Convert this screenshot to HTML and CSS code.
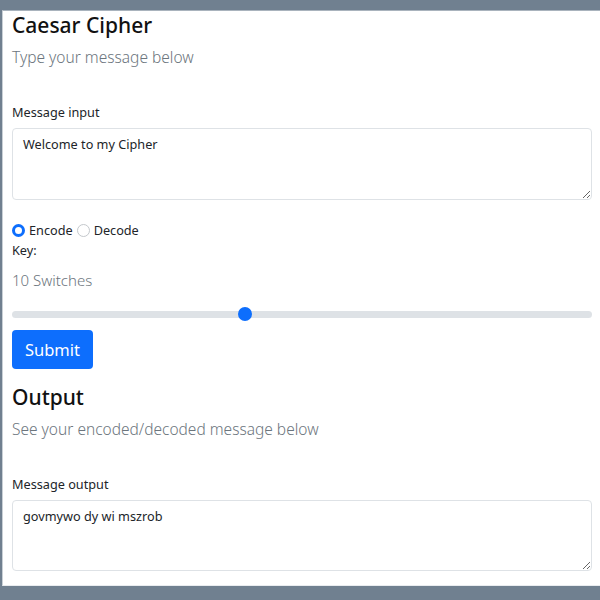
FILE: index.html
```html
<!DOCTYPE html>
<html lang="en">
<head>
<meta charset="utf-8">
<title>Caesar Cipher</title>
<link rel="stylesheet" href="styles.css">
</head>
<body>
<main class="card">
  <h3 class="title">Caesar Cipher</h3>
  <p class="lead">Type your message below</p>
  <label class="label label-first" for="msg-in">Message input</label>
  <textarea id="msg-in" class="field">Welcome to my Cipher</textarea>
  <div class="radios">
    <label class="radio"><input type="radio" name="mode" checked> Encode</label>
    <label class="radio"><input type="radio" name="mode"> Decode</label>
  </div>
  <div class="label">Key:</div>
  <p class="switches">10 Switches</p>
  <input class="range" type="range" min="0" max="25" value="10">
  <button class="btn" type="button">Submit</button>
  <h3 class="title title-out">Output</h3>
  <p class="lead">See your encoded/decoded message below</p>
  <label class="label label-first" for="msg-out">Message output</label>
  <textarea id="msg-out" class="field field-out">govmywo dy wi mszrob</textarea>
</main>
</body>
</html>
```

FILE: styles.css
```css
html, body {
  margin: 0;
  padding: 0;
}
body {
  background: #708090;
  font-family: "Noto Sans", "Open Sans", sans-serif;
  color: #212529;
  padding-top: 10px;
  padding-bottom: 14px;
}
.card {
  display: flex;
  flex-direction: column;
  align-items: flex-start;
  background: #fff;
  margin-left: 2px;
  border-left: 1px solid #c9d0d6;
  border-top: 1px solid #a9b3bd;
  border-bottom: 1px solid #e9ecef;
  padding: 0 8px 14px 9px;
}
.title {
  margin: 0;
  font-size: 21px;
  line-height: 28px;
  font-weight: 500;
  color: #111;
}
.title-out {
  margin-top: 14px;
}
.lead {
  margin: 6px 0 0;
  font-size: 15.5px;
  line-height: 24px;
  font-weight: 300;
  color: #6c757d;
}
.label {
  display: block;
  font-size: 12.7px;
  line-height: 20px;
  color: #212529;
}
.label-first {
  margin-top: 33px;
}
.field {
  box-sizing: border-box;
  align-self: stretch;
  margin-top: 6px;
  height: 72px;
  border: 1px solid #dee2e6;
  border-radius: 4px;
  padding: 5px 10px;
  font-family: inherit;
  font-size: 12.7px;
  line-height: 20px;
  color: #212529;
  background: #fff;
  outline: none;
}
.field-out {
  height: 71px;
}
.radios {
  display: flex;
  gap: 4px;
  margin-top: 20px;
  font-size: 12.7px;
  line-height: 20px;
}
.radio {
  display: flex;
  align-items: center;
  gap: 4px;
}
.radio input {
  appearance: none;
  -webkit-appearance: none;
  margin: 0;
  width: 13px;
  height: 13px;
  border-radius: 50%;
  border: 1px solid #c4c8cc;
  background: #fff;
}
.radio input:checked {
  border: 3.5px solid #0d6efd;
  background: #fff;
}
.switches {
  margin: 9px 0 0;
  font-size: 15px;
  line-height: 22px;
  font-weight: 300;
  color: #6c757d;
}
.range {
  appearance: none;
  -webkit-appearance: none;
  align-self: stretch;
  margin: 15px 0 0;
  height: 16px;
  background: transparent;
}
.range::-webkit-slider-runnable-track {
  height: 7px;
  border-radius: 4px;
  background: #dee2e6;
}
.range::-webkit-slider-thumb {
  -webkit-appearance: none;
  width: 14px;
  height: 14px;
  margin-top: -3.5px;
  border-radius: 50%;
  background: #0d6efd;
  border: 0;
}
.btn {
  margin-top: 8px;
  height: 39px;
  width: 81px;
  border: 0;
  border-radius: 4px;
  background: #0d6efd;
  color: #fff;
  font-family: inherit;
  font-size: 16.5px;
  padding: 0;
}
```
